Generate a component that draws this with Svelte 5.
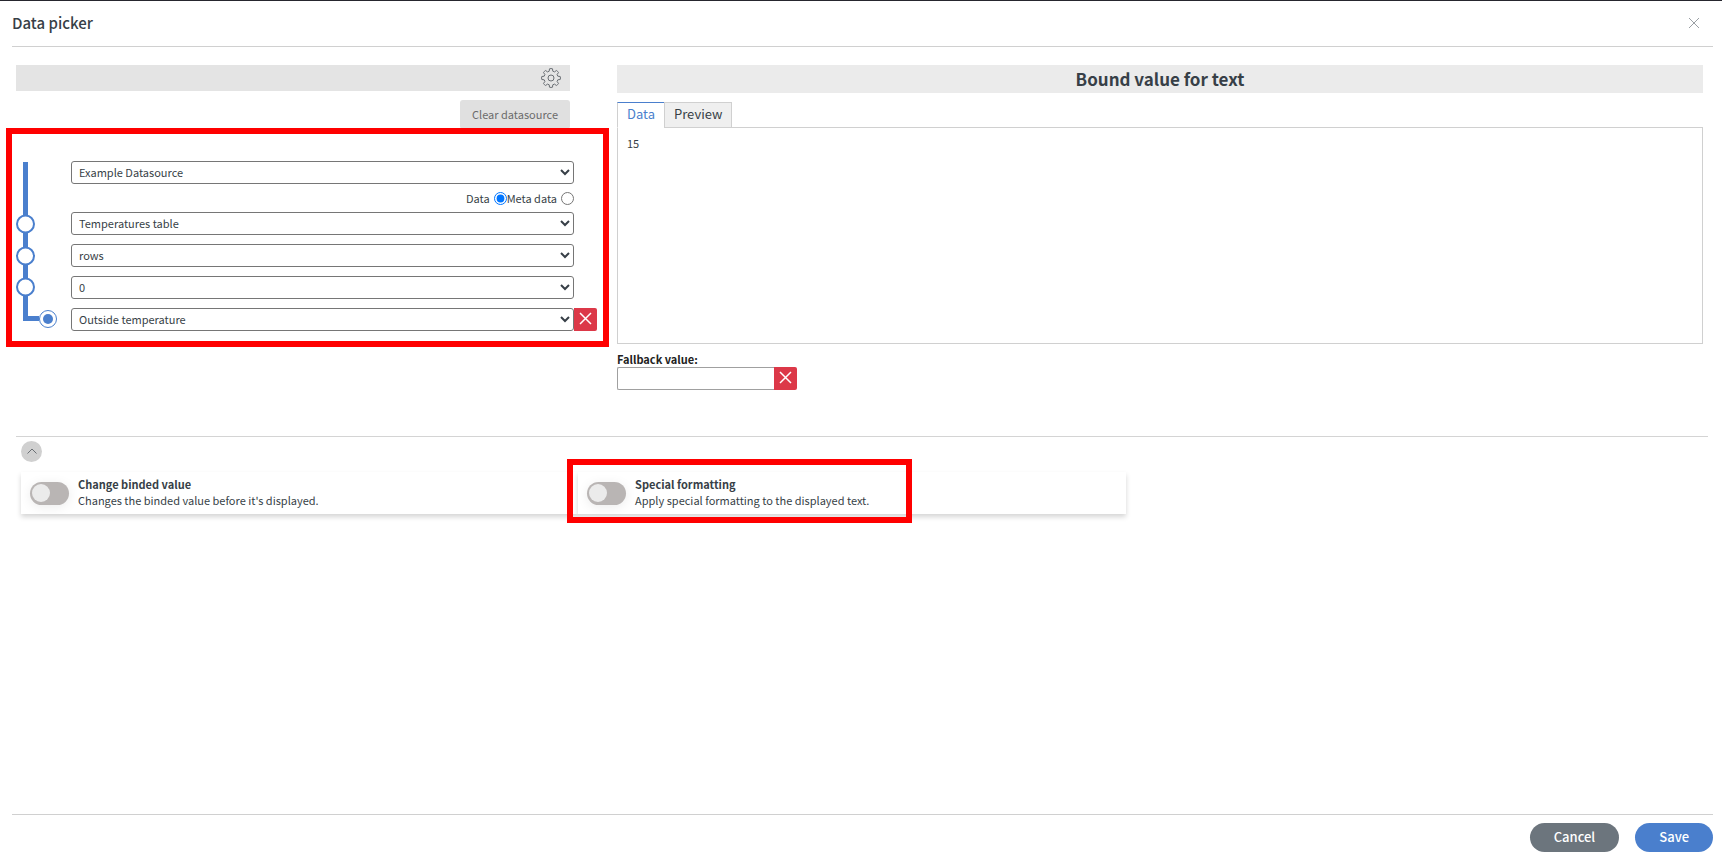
<script>
  let source = "Example Datasource";
  let mode = "data";
  let tab = "data";
  let fallback = "";
  let changeValue = false;
  let specialFormat = false;

  const levels = ["Temperatures table", "rows", "0", "Outside temperature"];
</script>

<div class="dialog">
  <header>
    <h1>Data picker</h1>
    <button type="button" class="close" aria-label="Close">
      <svg width="12" height="12" viewBox="0 0 12 12"><path d="M1 1l10 10M11 1L1 11" /></svg>
    </button>
  </header>

  <main>
    <div class="columns">
      <section class="left">
        <div class="bar">
          <button type="button" class="gear" aria-label="Settings">
            <svg width="20" height="20" viewBox="0 0 20 20">
              <path d="M8.500 .8Q10 .3 11.500 .8L11.800 3.200L13.500 3.900L15.400 2.500Q16.800 3.200 17.500 4.600L16.100 6.500L16.800 8.200L19.200 8.500Q19.700 10 19.200 11.500L16.800 11.800L16.100 13.500L17.500 15.400Q16.800 16.800 15.400 17.500L13.500 16.100L11.800 16.800L11.500 19.200Q10 19.700 8.500 19.200L8.200 16.800L6.500 16.100L4.600 17.500Q3.200 16.800 2.500 15.400L3.900 13.500L3.200 11.800L.8 11.500Q.3 10 .8 8.500L3.200 8.200L3.900 6.500L2.500 4.600Q3.200 3.200 4.600 2.500L6.500 3.900L8.200 3.200z" />
              <circle cx="10" cy="10" r="3" />
            </svg>
          </button>
        </div>
        <div class="clear">
          <button type="button">Clear datasource</button>
        </div>

        <div class="tree">
          <svg class="rail" width="42" height="170" viewBox="0 0 42 170">
            <path class="line" d="M9.500 1v156.500H23" />
            <circle cx="9.500" cy="63" r="8.500" />
            <circle cx="9.500" cy="95" r="8.500" />
            <circle cx="9.500" cy="126" r="8.500" />
            <circle class="ring" cx="32" cy="158" r="8.500" />
            <circle class="dot" cx="32" cy="158" r="5" />
          </svg>
          <div class="fields">
            <select aria-label="Datasource" bind:value={source}>
              <option>Example Datasource</option>
            </select>
            <div class="radios">
              <label for="modeData">Data</label>
              <input type="radio" id="modeData" value="data" bind:group={mode} />
              <label for="modeMeta">Meta data</label>
              <input type="radio" id="modeMeta" value="meta" bind:group={mode} />
            </div>
            {#each levels as level, i}
              <div class="level">
                <select aria-label="Level {i + 1}">
                  <option>{level}</option>
                </select>
                {#if i === levels.length - 1}
                  <button type="button" class="remove" aria-label="Remove level">
                    <svg width="13" height="13" viewBox="0 0 13 13"><path d="M1 1l11 11M12 1L1 12" /></svg>
                  </button>
                {/if}
              </div>
            {/each}
          </div>
          <div class="mark"></div>
        </div>
      </section>

      <section class="right">
        <h2>Bound value for text</h2>
        <div class="tabs">
          <button type="button" class:active={tab === "data"} on:click={() => (tab = "data")}>Data</button>
          <button type="button" class:active={tab === "preview"} on:click={() => (tab = "preview")}>Preview</button>
        </div>
        <div class="panel">15</div>
        <label class="fallbackLabel" for="fallback">Fallback value:</label>
        <div class="fallback">
          <input type="text" id="fallback" bind:value={fallback} />
          <button type="button" class="remove" aria-label="Clear fallback">
            <svg width="13" height="13" viewBox="0 0 13 13"><path d="M1 1l11 11M12 1L1 12" /></svg>
          </button>
        </div>
      </section>
    </div>

    <section class="options">
      <button type="button" class="collapse" aria-label="Collapse">
        <svg width="10" height="6" viewBox="0 0 10 6"><path d="M.5 5.500L5 1l4.500 4.500" /></svg>
      </button>
      <div class="cards">
        <div class="card">
          <input type="checkbox" id="changeValue" bind:checked={changeValue} />
          <label for="changeValue">
            <b>Change binded value</b>
            <span>Changes the binded value before it's displayed.</span>
          </label>
        </div>
        <div class="card">
          <input type="checkbox" id="specialFormat" bind:checked={specialFormat} />
          <label for="specialFormat">
            <b>Special formatting</b>
            <span>Apply special formatting to the displayed text.</span>
          </label>
          <div class="mark"></div>
        </div>
      </div>
    </section>
  </main>

  <footer>
    <button type="button" class="cancel">Cancel</button>
    <button type="button" class="save">Save</button>
  </footer>
</div>

<style>
  :global(body) {
    background: #fff;
  }

  .dialog {
    box-sizing: border-box;
    min-height: 100vh;
    display: flex;
    flex-direction: column;
    border-top: 1px solid #26262e;
    padding: 0 9px 0 12px;
    font-family: "Source Sans Pro", "Noto Sans CJK SC", sans-serif;
    font-size: 11px;
    line-height: 16px;
    color: #373f47;
  }

  .dialog * {
    box-sizing: border-box;
  }

  button,
  input,
  select {
    font: inherit;
    color: inherit;
    margin: 0;
  }

  button {
    border: 0;
    padding: 0;
    background: none;
    cursor: pointer;
  }

  svg {
    display: block;
    fill: none;
  }

  header {
    display: flex;
    align-items: center;
    justify-content: space-between;
    height: 46px;
    padding: 0 13px 2px 0;
    border-bottom: 1px solid #d0d0d0;
  }

  h1 {
    margin: 0;
    font-size: 15px;
    font-weight: 500;
  }

  .close svg {
    stroke: #9a9fa4;
  }

  main {
    flex: 1;
    padding: 18px 5px 0 4px;
  }

  .columns {
    display: grid;
    grid-template-columns: 581fr 1086fr;
    gap: 20px;
    padding-right: 5px;
    padding-bottom: 46px;
    border-bottom: 1px solid #d4d4d4;
  }

  .bar {
    display: flex;
    align-items: center;
    justify-content: flex-end;
    height: 26px;
    margin-right: 27px;
    padding-right: 9px;
    background: #e4e4e4;
  }

  .gear svg {
    stroke: #6a6f74;
  }

  .clear {
    display: flex;
    justify-content: flex-end;
    margin: 9px 27px 0 0;
  }

  .clear button {
    height: 29px;
    padding: 0 12px 2px;
    border-radius: 3px;
    background: #e0e0e0;
    color: #6b6b6b;
  }

  .tree {
    position: relative;
    display: flex;
    margin-top: 32px;
  }

  .rail {
    flex: none;
    margin: 0 13px 0 0;
    stroke: #4a7fcd;
    stroke-width: 2;
  }

  .rail circle {
    fill: #fff;
  }

  .rail .line {
    stroke-width: 5;
  }

  .rail .ring {
    stroke-width: 1;
  }

  .rail .dot {
    fill: #4a7fcd;
    stroke: none;
  }

  .fields {
    flex: 1;
  }

  select {
    display: block;
    width: 100%;
    height: 23px;
    padding: 0 4px 2px 3px;
    border: 1px solid #767676;
    border-radius: 3px;
    background: #fff;
  }

  .fields > select {
    width: auto;
    min-width: calc(100% - 23px);
  }

  .radios {
    display: flex;
    align-items: center;
    justify-content: flex-end;
    height: 28px;
    padding-right: 23px;
  }

  .radios input {
    width: 13px;
    height: 13px;
    margin-left: 4px;
    accent-color: #0075ff;
  }

  .level {
    display: flex;
    padding-right: 23px;
    margin-bottom: 9px;
  }

  .level:last-child {
    padding-right: 0;
    margin-bottom: 0;
  }

  .remove {
    flex: none;
    display: flex;
    align-items: center;
    justify-content: center;
    width: 23px;
    height: 23px;
    padding-bottom: 2px;
    border-radius: 0 2px 2px 0;
    background: #dc3848;
  }

  .remove svg {
    stroke: #fff;
    stroke-width: 1.500;
  }

  /* highlight frames over the content */
  .mark {
    position: absolute;
    inset: -33px -12px -16px -10px;
    border: 6px solid #f00;
    pointer-events: none;
  }

  h2 {
    margin: 0;
    padding-bottom: 1px;
    background: #ebebeb;
    font-size: 17px;
    line-height: 27px;
    text-align: center;
  }

  .tabs {
    display: flex;
    margin-top: 9px;
  }

  .tabs button {
    height: 26px;
    padding: 0 9px 2px;
    margin-bottom: -1px;
    border: 1px solid #d0d0d0;
    background: #efefef;
    font-size: 13px;
  }

  .tabs .active {
    border-top-color: #4a7fcd;
    border-right: 0;
    border-bottom-color: #fff;
    background: #fff;
    color: #4a7fcd;
  }

  .panel {
    height: 217px;
    padding: 7px 9px;
    border: 1px solid #d0d0d0;
  }

  .fallbackLabel {
    display: block;
    margin-top: 7px;
    font-weight: bold;
    color: #222;
  }

  .fallback {
    display: flex;
  }

  .fallback input {
    width: 157px;
    height: 23px;
    padding: 1px 4px;
    border: 1px solid #a0a0a0;
    border-right: 0;
    border-radius: 2px 0 0 2px;
  }

  .options {
    padding: 4px 5px;
  }

  .collapse {
    display: flex;
    align-items: center;
    justify-content: center;
    width: 21px;
    height: 21px;
    padding-bottom: 2px;
    border-radius: 50%;
    background: #d0d0d0;
  }

  .collapse svg {
    stroke: #6a6f74;
  }

  .cards {
    display: grid;
    grid-template-columns: 557fr 548fr;
    width: 66%;
    padding-right: 5px;
    margin-top: 10px;
  }

  .card {
    position: relative;
    display: flex;
    align-items: center;
    height: 42px;
    padding-left: 9px;
    background: #fff;
    box-shadow: 0 3px 5px rgba(0, 0, 0, 0.17);
  }

  .card input {
    appearance: none;
    display: flex;
    align-items: center;
    width: 39px;
    height: 23px;
    padding: 2px;
    margin-right: 9px;
    border-radius: 12px;
    background: #b9b5b4;
    box-shadow: 0 2px 12px rgba(0, 0, 0, 0.08);
  }

  .card input::before {
    content: "";
    width: 18px;
    height: 18px;
    border-radius: 50%;
    background: #ebebeb;
  }

  .card input:checked {
    justify-content: flex-end;
    background: #4a7fcd;
  }

  .card label {
    padding-bottom: 2px;
  }

  .card b,
  .card span {
    display: block;
  }

  .card .mark {
    inset: -13px auto -9px -11px;
    width: 345px;
  }

  footer {
    display: flex;
    justify-content: flex-end;
    gap: 16px;
    padding: 8px 0 3px;
    border-top: 1px solid #d0d0d0;
  }

  footer button {
    height: 29px;
    padding: 0 24px 2px;
    border-radius: 15px;
    font-size: 13px;
    font-weight: 500;
    color: #fff;
  }

  .cancel {
    background: #6c757d;
  }

  .save {
    background: #4a7fcd;
  }
</style>
